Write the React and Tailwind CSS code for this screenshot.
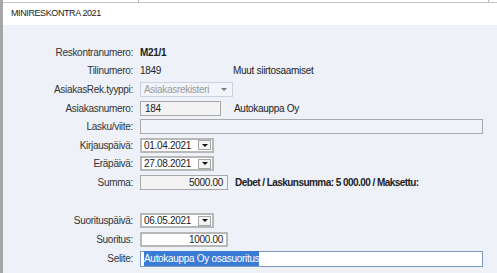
const font = { fontFamily: '"Liberation Sans", Arial, sans-serif' };

const Row = ({ label, h = 'h-[19px]', children }) => (
  <div className={`flex items-center ${h}`}>
    <div className="w-[131px] shrink-0 pr-[1px] text-right text-[10px] text-[#333]">{label}</div>
    <div className="ml-[6px] flex items-center">{children}</div>
  </div>
);

const DropButton = () => (
  <div className="flex h-[10px] w-[13px] items-center justify-center border border-[#a5a5a5] bg-[#f4f4f4]">
    <div className="h-0 w-0 border-x-[3px] border-t-[3px] border-x-transparent border-t-[#111]" />
  </div>
);

const DateInput = ({ value }) => (
  <div className="flex h-[15px] w-[74px] items-center justify-between border-2 border-[#b8b8b8] bg-white pl-[2px] pr-[1px] text-[10px] text-[#222]">
    <span>{value}</span>
    <DropButton />
  </div>
);

const App = () => {
  return (
    <div className="flex h-[273px] w-[497px] overflow-hidden bg-white tracking-[-0.3px]" style={font}>
      <div className="w-[3px] shrink-0 bg-[#a6a6a6]" />
      <div className="flex flex-1 flex-col">
        <div className="flex h-[3px] border-b border-[#c4c4c4]">
          <div className="ml-[135px] w-px bg-[#b9b4d6]" />
          <div className="ml-[349px] w-px bg-[#b9b4d6]" />
        </div>
        <div className="flex h-[22px] items-center bg-white pl-[8px] text-[9px] tracking-[-0.4px] text-[#222]">MINIRESKONTRA 2021</div>
        <div className="flex flex-1 flex-col bg-[#eef1f8] pt-[18px]">
          <Row label="Reskontranumero:" h="h-[18px]">
            <span className="text-[10px] font-bold text-[#222]">M21/1</span>
          </Row>
          <Row label="Tilinumero:">
            <span className="w-[93px] text-[10px] text-[#222]">1849</span>
            <span className="text-[10px] text-[#222]">Muut siirtosaamiset</span>
          </Row>
          <Row label="AsiakasRek.tyyppi:">
            <div className="flex h-[15px] w-[93px] items-center justify-between border border-[#c9d1e3] bg-[#f2f4f9] pl-[3px] pr-[5px] text-[10px] text-[#9a9a9a]">
              <span>Asiakasrekisteri</span>
              <div className="h-0 w-0 border-x-[3px] border-t-[3px] border-x-transparent border-t-[#777]" />
            </div>
          </Row>
          <Row label="Asiakasnumero:" h="h-[18px]">
            <div className="flex h-[15px] w-[81px] items-center border border-[#a9a9a9] bg-[#f3f3f3] pl-[4px] text-[10px] text-[#222]">184</div>
            <span className="ml-[13px] text-[10px] text-[#222]">Autokauppa Oy</span>
          </Row>
          <Row label="Lasku/viite:">
            <div className="h-[15px] w-[343px] border border-[#a9a9a9] bg-[#f1f3f8]" />
          </Row>
          <Row label="Kirjauspäivä:" h="h-[18px]">
            <DateInput value="01.04.2021" />
          </Row>
          <Row label="Eräpäivä:">
            <DateInput value="27.08.2021" />
          </Row>
          <Row label="Summa:" h="h-[18px]">
            <div className="flex h-[15px] w-[88px] items-center justify-end border border-[#a9a9a9] bg-[#f3f3f3] pr-[4px] text-[10px] text-[#222]">5000.00</div>
            <span className="ml-[7px] text-[10px] font-bold tracking-[-0.55px] text-[#222]">Debet / Laskunsumma: 5 000.00 / Maksettu:</span>
          </Row>
          <div className="h-[20px]" />
          <Row label="Suorituspäivä:">
            <DateInput value="06.05.2021" />
          </Row>
          <Row label="Suoritus:">
            <div className="flex h-[15px] w-[88px] items-center justify-end border-2 border-[#b8b8b8] bg-white pr-[3px] text-[10px] text-[#222]">1000.00</div>
          </Row>
          <Row label="Selite:">
            <div className="flex h-[16px] w-[343px] items-center border border-[#7a96c4] bg-white pl-[3px] text-[10px]">
              <span className="bg-[#3a7bd5] text-white">Autokauppa Oy osasuoritus</span>
            </div>
          </Row>
        </div>
      </div>
    </div>
  );
};

export default App;
